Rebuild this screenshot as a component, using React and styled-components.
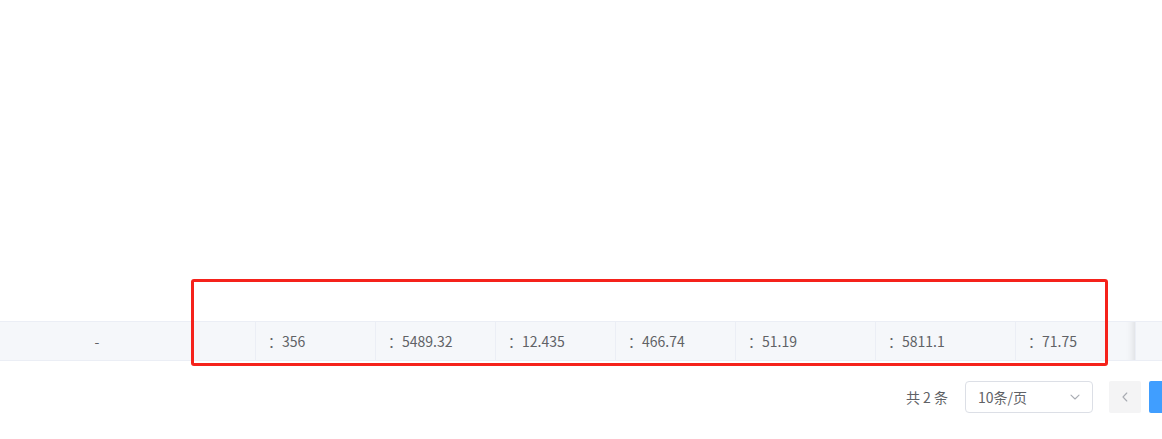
import React from "react";
import styled, { createGlobalStyle } from "styled-components";

const Global = createGlobalStyle`
  html, body { margin: 0; padding: 0; background: #ffffff; }
  body {
    font-family: "Noto Sans CJK SC", "Liberation Sans", sans-serif;
    color: #606266;
    -webkit-font-smoothing: antialiased;
  }
  #root { width: 1162px; height: 439px; overflow: hidden; }
`;

const Page = styled.div`
  width: 1162px;
  height: 439px;
  overflow: hidden;
  display: flex;
  flex-direction: column;
  background: #fff;
  position: relative;
`;

const TableBody = styled.div`
  height: 321px;
  flex: 0 0 321px;
  background: #fff;
`;

const SummaryRow = styled.div`
  display: flex;
  height: 38px;
  flex: 0 0 auto;
  border-top: 1px solid #ebeef5;
  border-bottom: 1px solid #ebeef5;
  background: #f5f7fa;
`;

const Cell = styled.div`
  flex: 0 0 ${(p) => p.$w}px;
  box-sizing: border-box;
  display: flex;
  align-items: center;
  justify-content: ${(p) => (p.$center ? "center" : "flex-start")};
  padding: 0 12px;
  font-size: 14px;
  color: #606266;
  border-right: ${(p) => (p.$noBorder ? "none" : "1px solid #ebeef5")};
  white-space: nowrap;
`;

const FixedCell = styled.div`
  flex: 1 1 auto;
  position: relative;
  background: #f5f7fa;
  border-left: 1px solid #ebeef5;
  &::before {
    content: "";
    position: absolute;
    left: -11px;
    top: 0;
    bottom: 0;
    width: 10px;
    box-shadow: inset -10px 0 10px -10px rgba(0, 0, 0, 0.15);
  }
`;

const PagerBar = styled.div`
  display: flex;
  justify-content: flex-end;
  align-items: center;
  margin-top: 20px;
  width: calc(100% + 19px);
  height: 32px;
  flex: 0 0 32px;
`;

const Total = styled.span`
  font-size: 14px;
  color: #606266;
  margin-right: 17px;
  white-space: nowrap;
`;

const SelectBox = styled.div`
  box-sizing: border-box;
  width: 128px;
  height: 32px;
  border: 1px solid #dcdfe6;
  border-radius: 4px;
  display: flex;
  align-items: center;
  justify-content: space-between;
  padding: 0 11px 0 12px;
  font-size: 14px;
  color: #606266;
  margin-right: 16px;
`;

const PageBtn = styled.div`
  box-sizing: border-box;
  width: 32px;
  height: 32px;
  border-radius: 2px;
  display: flex;
  align-items: center;
  justify-content: center;
  background: ${(p) => (p.$active ? "#409eff" : "#f4f4f5")};
  color: ${(p) => (p.$active ? "#fff" : "#a8abb2")};
  font-size: 13px;
  font-weight: 600;
  margin-left: ${(p) => p.$ml || 0}px;
`;

const Annotation = styled.div`
  position: absolute;
  left: 191px;
  top: 279px;
  width: 917px;
  height: 87px;
  box-sizing: border-box;
  border: 3px solid #f5221b;
  border-radius: 3px;
  pointer-events: none;
`;

const Chevron = ({ dir }) => (
  <svg width="12" height="12" viewBox="0 0 12 12" fill="none">
    {dir === "down" ? (
      <path d="M2 4.2 L6 8 L10 4.2" stroke="#a8abb2" strokeWidth="1.1" strokeLinecap="round" strokeLinejoin="round" />
    ) : (
      <path d="M7.8 2 L4 6 L7.8 10" stroke="#a8abb2" strokeWidth="1.1" strokeLinecap="round" strokeLinejoin="round" />
    )}
  </svg>
);

const values = [
  { w: 120, v: "356" },
  { w: 120, v: "5489.32" },
  { w: 120, v: "12.435" },
  { w: 120, v: "466.74" },
  { w: 140, v: "51.19" },
  { w: 140, v: "5811.1" },
  { w: 119, v: "71.75" },
];

export default function App() {
  return (
    <>
      <Global />
      <Page>
        <TableBody />
        <SummaryRow>
          <Cell $w={194} $center $noBorder>-</Cell>
          <Cell $w={62} />
          {values.map((c, i) => (
            <Cell key={i} $w={c.w} $noBorder={i === values.length - 1}>
              ：{c.v}
            </Cell>
          ))}
          <FixedCell />
        </SummaryRow>
        <PagerBar>
          <Total>共 2 条</Total>
          <SelectBox>
            <span>10条/页</span>
            <Chevron dir="down" />
          </SelectBox>
          <PageBtn>
            <Chevron dir="left" />
          </PageBtn>
          <PageBtn $active $ml={8} aria-label="第 1 页" />
        </PagerBar>
        <Annotation />
      </Page>
    </>
  );
}
